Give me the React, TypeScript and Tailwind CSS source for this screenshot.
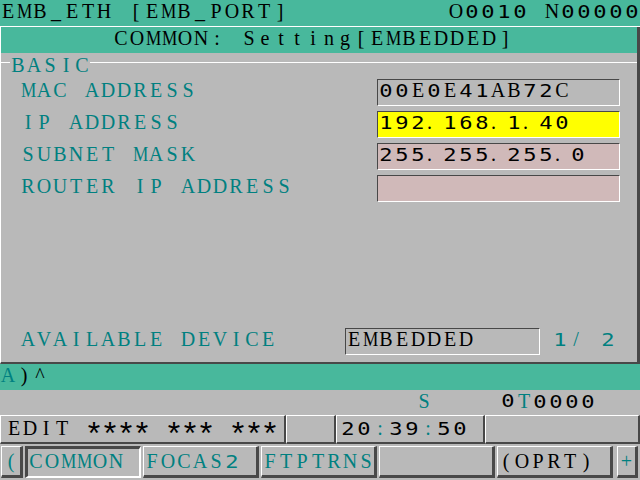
import React from "react";

const DIGIT = /[0-9]/;

function T({ s, c = "text-black" }: { s: string; c?: string }) {
  return (
    <span className={`whitespace-pre ${c}`}>
      {Array.from(s).map((ch, i) => {
        let cls =
          "inline-block w-[16px] text-center font-['Liberation_Serif',serif] text-[20px]";
        if (DIGIT.test(ch))
          cls =
            "inline-block w-[16px] text-center font-['DejaVu_Sans_Mono',monospace] text-[17px] scale-x-[1.3]";
        else if (ch === ".")
          cls =
            "inline-block w-[16px] text-left pl-[1px] font-['Liberation_Serif',serif] text-[20px]";
        else if (ch === "*")
          cls =
            "inline-block w-[16px] h-[20px] align-top text-center font-['Liberation_Sans',sans-serif] text-[32px] leading-[20px] translate-y-[5px]";
        else if (ch === "M" || ch === "W")
          cls =
            "inline-block w-[16px] text-center font-['Liberation_Serif',serif] text-[20px] scale-x-[0.86]";
        return (
          <span key={i} className={cls}>
            {ch}
          </span>
        );
      })}
    </span>
  );
}

const TEAL = "text-[#008080]";

function Row({ label, value, fill }: { label: string; value: string; fill: string }) {
  return (
    <div className="flex h-[27px] shrink-0">
      <div className="w-[376px] pl-[19px] pt-[1px]">
        <T s={label} c={TEAL} />
      </div>
      <div
        className={`w-[243px] h-[27px] border border-t-[#484848] border-l-[#484848] border-b-white border-r-white ${fill}`}
      >
        <T s={value} />
      </div>
    </div>
  );
}

const RAISED =
  "h-[32px] border-t border-l border-t-white border-l-white border-b-[3px] border-r-[3px] border-b-[#484848] border-r-[#484848]";
const SUNKEN =
  "h-[32px] border-t-[3px] border-l-[3px] border-t-[#484848] border-l-[#484848] border-b-2 border-r-2 border-b-white border-r-white";
const SBOX =
  "h-[29px] border-t border-l border-t-white border-l-white border-b-2 border-r-2 border-b-[#484848] border-r-[#484848]";

export default function App() {
  return (
    <div className="w-[640px] h-[480px] overflow-hidden bg-[#b9b9b9] leading-[20px] flex flex-col">
      {/* header */}
      <div className="h-[26px] shrink-0 bg-[#48b89c] flex justify-between items-start pt-[1px]">
        <T s="EMB_ETH [EMB_PORT]" />
        <T s="O0010 N00000" />
      </div>
      <div className="h-px shrink-0 bg-white" />

      {/* main panel */}
      <div className="h-[337px] shrink-0 flex flex-col border-l border-l-white border-r-[3px] border-r-[#484848] border-b-2 border-b-[#484848]">
        <div className="h-[26px] shrink-0 bg-[#48b89c] pl-[112px] pt-[1px]">
          <T s="COMMON: Setting[EMBEDDED]" />
        </div>
        <div className="flex-1 flex flex-col pb-[7px]">
          <div className="flex items-start h-[26px] shrink-0">
            <div className="w-[9px] h-px bg-white mt-[9px]" />
            <div className="pt-[2px]">
              <T s="BASIC" c={TEAL} />
            </div>
            <div className="flex-1 h-px bg-white mt-[9px]" />
          </div>
          <div className="flex flex-col gap-[5px]">
            <Row label="MAC ADDRESS" value="00E0E41AB72C" fill="" />
            <Row label="IP ADDRESS" value="192.168.1.40" fill="bg-[#ffff00]" />
            <Row label="SUBNET MASK" value="255.255.255.0" fill="bg-[#d0b9b9]" />
            <Row label="ROUTER IP ADDRESS" value="" fill="bg-[#d0b9b9]" />
          </div>
          <div className="flex-1" />
          <div className="flex h-[27px] shrink-0">
            <div className="w-[344px] pl-[19px] pt-[1px]">
              <T s="AVAILABLE DEVICE" c={TEAL} />
            </div>
            <div className="w-[195px] h-[27px] border border-t-[#484848] border-l-[#484848] border-b-white border-r-white">
              <T s="EMBEDDED" />
            </div>
            <div className="ml-[12px] pt-[1px]">
              <T s="1/ 2" c={TEAL} />
            </div>
          </div>
        </div>
      </div>

      {/* input line */}
      <div className="h-[26px] shrink-0 bg-[#48b89c] pt-[1px]">
        <T s="A" c={TEAL} />
        <T s=")^" />
      </div>

      {/* S T row */}
      <div className="h-[25px] shrink-0 flex pt-[1px]">
        <div className="ml-[416px]">
          <T s="S" c={TEAL} />
        </div>
        <div className="ml-[68px]">
          <T s="0" />
        </div>
        <div>
          <T s="T" c={TEAL} />
          <T s="0000" />
        </div>
      </div>

      {/* status row */}
      <div className="h-[29px] shrink-0 flex">
        <div className={`${SBOX} w-[286px] pl-[5px] pt-[2px]`}>
          <T s="EDIT **** *** ***" />
        </div>
        <div className={`${SBOX} w-[50px]`} />
        <div className={`${SBOX} w-[149px] pl-[3px] pt-[2px]`}>
          <T s="20" />
          <T s=":" c={TEAL} />
          <T s="39" />
          <T s=":" c={TEAL} />
          <T s="50" />
        </div>
        <div className={`${SBOX} flex-1`} />
      </div>

      {/* soft keys */}
      <div className="h-[32px] shrink-0 mt-[2px] flex">
        <div className={`${RAISED} ml-[1px] w-[22px] flex justify-center pt-[4px]`}>
          <T s="(" c={TEAL} />
        </div>
        <div className={`${SUNKEN} ml-[2px] w-[116px] pt-[2px]`}>
          <T s="COMMON" c={TEAL} />
        </div>
        <div className={`${RAISED} ml-[2px] w-[116px] pt-[4px]`}>
          <T s="FOCAS2" c={TEAL} />
        </div>
        <div className={`${RAISED} ml-[2px] w-[116px] pt-[4px]`}>
          <T s="FTPTRNS" c={TEAL} />
        </div>
        <div className={`${RAISED} ml-[2px] w-[116px]`} />
        <div className={`${RAISED} ml-[2px] w-[116px] pt-[4px]`}>
          <T s="(OPRT)" />
        </div>
        <div className={`${RAISED} ml-[4px] w-[21px] flex justify-center pt-[4px]`}>
          <T s="+" c={TEAL} />
        </div>
      </div>
    </div>
  );
}
